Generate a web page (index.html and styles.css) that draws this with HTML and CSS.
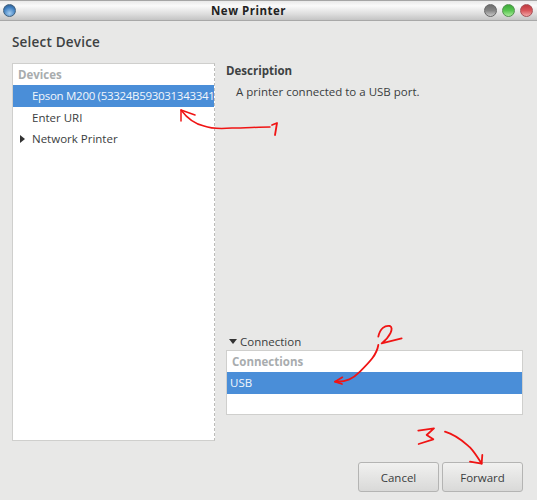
FILE: index.html
```html
<!DOCTYPE html>
<html lang="en">
<head>
<meta charset="utf-8">
<title>New Printer</title>
<link rel="stylesheet" href="styles.css">
</head>
<body>
<div class="window">
  <header class="titlebar">
    <span class="menu-btn"></span>
    <span class="title">New Printer</span>
    <span class="controls">
      <span class="dot grey"></span>
      <span class="dot green"></span>
      <span class="dot red"></span>
    </span>
  </header>
  <main class="content">
    <h1 class="heading">Select Device</h1>
    <div class="columns">
      <section class="list devices">
        <div class="list-head">Devices</div>
        <div class="row selected indent"><span class="clip">Epson M200 (53324B593031343341)</span></div>
        <div class="row indent">Enter URI</div>
        <div class="row expander"><span class="arrow-right"></span>Network Printer</div>
      </section>
      <section class="side">
        <h2 class="desc-title">Description</h2>
        <p class="desc">A printer connected to a USB port.</p>
        <div class="spacer"></div>
        <div class="conn-label"><span class="arrow-down"></span>Connection</div>
        <div class="list conns">
          <div class="list-head">Connections</div>
          <div class="row selected plain">USB</div>
          <div class="row plain"></div>
        </div>
      </section>
    </div>
    <div class="buttons">
      <button class="btn" type="button">Cancel</button>
      <button class="btn" type="button">Forward</button>
    </div>
  </main>
  <svg class="notes" width="537" height="500" viewBox="0 0 537 500" fill="none" stroke="#f01414" stroke-width="1.5" stroke-linecap="round" stroke-linejoin="round">
    <path d="M181 110C187 118 195 124 204 126C212 129 220 129 232 128C245 128 258 127 270 127"/>
    <path d="M195 115L181 110L181 121"/>
    <path d="M272 125L277 123L275 135" stroke-width="1.8"/>
    <g transform="translate(200 320) scale(.3333)" stroke-width="5.4">
      <path d="M535 50C540 25 555 15 570 18C582 25 570 50 545 70L605 55"/>
      <path d="M535 75C530 105 510 125 480 155C460 175 440 187 405 185"/>
      <path d="M427 172L405 185L426 192"/>
      <path d="M655 332L702 325L680 345L700 358L656 372"/>
      <path d="M735 335C770 345 790 365 810 382C825 398 835 415 845 431"/>
      <path d="M847 405L845 431L810 425"/>
    </g>
  </svg>
</div>
</body>
</html>
```

FILE: styles.css
```css
* { box-sizing: border-box; }
html, body { margin: 0; padding: 0; }
body {
  width: 537px;
  height: 500px;
  overflow: hidden;
  background: #e8e8e7;
  font-family: "Open Sans", "Noto Sans", sans-serif;
  font-size: 11.5px;
  color: #3a3d3e;
}
.window {
  position: relative;
  width: 537px;
  height: 500px;
  display: flex;
  flex-direction: column;
  background: #e8e8e7;
}
.titlebar {
  height: 21px;
  flex: none;
  display: flex;
  align-items: center;
  position: relative;
  padding: 0 3px;
  background: linear-gradient(#e9e9e9, #fafafa 25%, #dcdcdc 70%, #c4c4c4);
  border-top: 1px solid #a5a5a5;
  border-bottom: 1px solid #a8a8a8;
}
.title {
  flex: 1;
  text-align: center;
  font-weight: 700;
  font-size: 11.5px;
  letter-spacing: .5px;
  color: #222;
  padding-right: 3px;
}
.menu-btn {
  width: 13px;
  height: 13px;
  border-radius: 50%;
  border: 1px solid #41617e;
  background: radial-gradient(circle at 50% 75%, #a5cdf0, #3f7fc0 60%, #28507c);
}
.controls { display: flex; gap: 5px; margin-right: 1px; }
.dot {
  width: 13px;
  height: 13px;
  border-radius: 50%;
  border: 1px solid #666;
}
.grey { background: linear-gradient(#6f6f6f, #858585 50%, #c8c8c8); }
.green { background: linear-gradient(#3da93a, #58c550 50%, #a9ec9b); border-color: #52924e; }
.red { background: linear-gradient(#c03a3f, #d8555a 50%, #f2a6a6); border-color: #a65055; }
.content {
  flex: 1;
  display: flex;
  flex-direction: column;
  padding: 0 14px 8px 12px;
}
.heading {
  margin: 12px 0 11px;
  font-size: 13.5px;
  line-height: 19px;
  font-weight: 600;
  letter-spacing: .2px;
  color: #3d4142;
}
.columns {
  flex: none;
  height: 378px;
  display: flex;
  gap: 11px;
}
.list {
  background: #fff;
  border: 1px solid #cfcfcd;
}
.devices {
  width: 203px;
  flex: none;
  border-right: 1px dashed #bdbdbb;
}
.list-head {
  height: 21px;
  line-height: 21px;
  padding-left: 5px;
  font-weight: 700;
  color: #a8acae;
}
.row {
  height: 21.5px;
  line-height: 21px;
  white-space: nowrap;
  overflow: hidden;
}
.indent { padding-left: 19px; }
.plain { padding-left: 3px; }
.expander { display: flex; align-items: center; padding-left: 7px; }
.selected { background: #4a8ed8; color: #f2f6fb; }
.clip { display: block; overflow: hidden; letter-spacing: -.3px; }
.arrow-right {
  width: 0;
  height: 0;
  margin-right: 7px;
  border-left: 5px solid #333;
  border-top: 4.5px solid transparent;
  border-bottom: 4.5px solid transparent;
}
.side {
  flex: 1;
  display: flex;
  flex-direction: column;
  min-width: 0;
}
.desc-title {
  margin: 0;
  font-size: 11.5px;
  line-height: 16px;
  font-weight: 700;
  color: #3d4142;
}
.desc {
  margin: 5px 0 0 10px;
  line-height: 16px;
}
.spacer { flex: 1; }
.conn-label {
  display: flex;
  align-items: center;
  height: 16px;
  margin-bottom: 1px;
  padding-left: 3px;
}
.arrow-down {
  width: 0;
  height: 0;
  margin-right: 3px;
  border-top: 5px solid #333;
  border-left: 4.5px solid transparent;
  border-right: 4.5px solid transparent;
}
.conns {
  height: 65px;
  margin-bottom: 26px;
}
.buttons {
  margin-top: 21px;
  display: flex;
  justify-content: flex-end;
  gap: 3px;
}
.btn {
  width: 81px;
  height: 30px;
  font: inherit;
  color: #3a3d3e;
  background: linear-gradient(#f1f1f0, #d9d9d8);
  border: 1px solid #b4b4b3;
  border-radius: 3px;
}
.notes {
  position: absolute;
  left: 0;
  top: 0;
  pointer-events: none;
}
```
